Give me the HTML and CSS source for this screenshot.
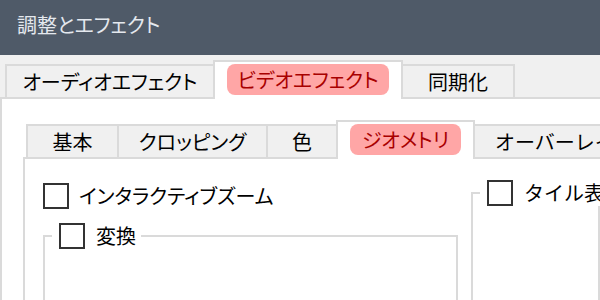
FILE: index.html
```html
<!DOCTYPE html>
<html lang="ja">
<head>
<meta charset="utf-8">
<title>調整とエフェクト</title>
<link rel="stylesheet" href="styles.css">
</head>
<body>
<div class="titlebar">調整とエフェクト</div>
<div class="tabs outer-tabs">
  <div class="tab w-audio">オーディオエフェクト</div>
  <div class="tab active w-video"><span class="pill">ビデオエフェクト</span></div>
  <div class="tab w-sync">同期化</div>
</div>
<div class="panel outer-panel">
  <div class="tabs inner-tabs">
    <div class="tab w-basic">基本</div>
    <div class="tab w-crop">クロッピング</div>
    <div class="tab w-color">色</div>
    <div class="tab active w-geo"><span class="pill">ジオメトリ</span></div>
    <div class="tab w-overlay fixed-width">オーバーレイ</div>
  </div>
  <div class="panel inner-panel">
    <div class="col-left">
      <label class="check first"><span class="box"></span>インタラクティブズーム</label>
      <fieldset class="group left-group">
        <legend class="check legend"><span class="box"></span>変換</legend>
      </fieldset>
    </div>
    <div class="col-right">
      <fieldset class="group right-group">
        <legend class="check legend fixed-width"><span class="box"></span>タイル表示</legend>
      </fieldset>
    </div>
  </div>
</div>
</body>
</html>
```
FILE: styles.css
```css
* { box-sizing: border-box; }

body {
  margin: 0;
  width: 600px;
  height: 300px;
  overflow: hidden;
  background: #f0f0f0;
  font-family: "Noto Sans CJK JP", "Noto Sans", sans-serif;
  font-size: 20px;
  font-feature-settings: "palt";
  color: #000;
}

.titlebar {
  height: 55px;
  background: #4f5a68;
  color: #e4e8ee;
  padding: 0 0 6px 17px;
  display: flex;
  align-items: center;
}

.tabs {
  display: flex;
  align-items: flex-end;
  position: relative;
  z-index: 1;
}

.outer-tabs { padding: 5px 0 0 5px; }
.inner-tabs { padding-left: 3px; }

.tab {
  display: flex;
  align-items: center;
  justify-content: center;
  flex: none;
  height: 33px;
  background: #f0f0f0;
  border: 2px solid #dadada;
  border-bottom: 0;
  margin-left: -2px;
  white-space: nowrap;
  line-height: 1;
}
.tab:first-child { margin-left: 0; }

.tab.active {
  height: 39px;
  margin-bottom: -2px;
  background: #fff;
  position: relative;
  z-index: 2;
  align-items: flex-start;
  padding: 2px 12px 0;
}

.pill {
  flex: 1;
  height: 31px;
  display: flex;
  align-items: center;
  justify-content: center;
  background: #ffa6a6;
  color: #a80000;
  border-radius: 8px;
}

.w-audio { width: 210px; }
.w-video { width: 190px; }
.w-sync { width: 114px; }
.w-basic { width: 93px; }
.w-crop { width: 151px; }
.w-color { width: 72px; }
.w-geo { width: 139px; padding: 2px 12px 0 11px; }
.w-overlay { justify-content: flex-start; padding: 0 20px; }

.fixed-width { font-feature-settings: normal; }

.panel {
  background: #fff;
  border-top: 2px solid #dadada;
  border-left: 2px solid #dadada;
}

.outer-panel {
  height: 220px;
  padding: 21px 0 0 21px;
}

.inner-panel {
  height: 200px;
  display: flex;
  padding: 21px 0 0 18px;
}

.col-left {
  width: 415px;
  flex: none;
  margin-right: 13px;
}

.col-right {
  flex: 1;
  min-width: 0;
}

.check {
  display: flex;
  align-items: center;
  gap: 10px;
  height: 26px;
  white-space: nowrap;
  line-height: 1;
}

.box {
  width: 26px;
  height: 26px;
  flex: none;
  border: 2px solid #333;
  background: #fff;
}

.first { margin-top: 3px; }

.group {
  margin: 0;
  padding: 0;
  min-width: 0;
  height: 160px;
  border: 2px solid #dadada;
}

.left-group { margin-top: 14px; }

.legend {
  margin-left: 7px;
  padding: 0 5px 0 7px;
  gap: 11px;
}
```
